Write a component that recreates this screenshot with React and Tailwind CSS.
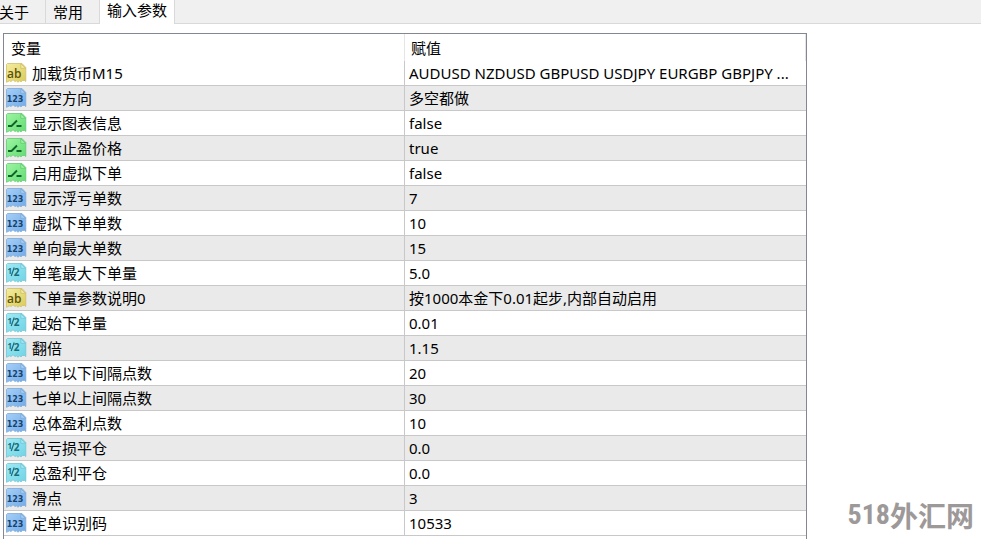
import { useState } from 'react';

const tabs = ['关于', '常用', '输入参数'];

const params = [
  { type: 'string', name: '加载货币M15', value: 'AUDUSD NZDUSD GBPUSD USDJPY EURGBP GBPJPY ...' },
  { type: 'int', name: '多空方向', value: '多空都做' },
  { type: 'bool', name: '显示图表信息', value: 'false' },
  { type: 'bool', name: '显示止盈价格', value: 'true' },
  { type: 'bool', name: '启用虚拟下单', value: 'false' },
  { type: 'int', name: '显示浮亏单数', value: '7' },
  { type: 'int', name: '虚拟下单单数', value: '10' },
  { type: 'int', name: '单向最大单数', value: '15' },
  { type: 'double', name: '单笔最大下单量', value: '5.0' },
  { type: 'string', name: '下单量参数说明0', value: '按1000本金下0.01起步,内部自动启用' },
  { type: 'double', name: '起始下单量', value: '0.01' },
  { type: 'double', name: '翻倍', value: '1.15' },
  { type: 'int', name: '七单以下间隔点数', value: '20' },
  { type: 'int', name: '七单以上间隔点数', value: '30' },
  { type: 'int', name: '总体盈利点数', value: '10' },
  { type: 'double', name: '总亏损平仓', value: '0.0' },
  { type: 'double', name: '总盈利平仓', value: '0.0' },
  { type: 'int', name: '滑点', value: '3' },
  { type: 'int', name: '定单识别码', value: '10533' },
];

const colors = {
  string: { light: '#f4eda0', dark: '#dccb58', edge: '#cdbf6c', ink: '#5c540c' },
  int: { light: '#a5cff8', dark: '#72aae8', edge: '#7fa9d6', ink: '#17446f' },
  bool: { light: '#9df5a2', dark: '#62dc72', edge: '#66c874', ink: '#0f6428' },
  double: { light: '#a0eaf5', dark: '#6fd3e4', edge: '#74c4d2', ink: '#1a6c7a' },
};

function TypeIcon({ type }) {
  const c = colors[type];
  const id = `fill-${type}`;

  return (
    <svg width="22" height="22" viewBox="0 0 22 22" className="shrink-0" aria-hidden="true">
      <defs>
        <linearGradient id={id} x1="0" y1="0" x2="1" y2="1">
          <stop offset="0" stopColor={c.light} />
          <stop offset="1" stopColor={c.dark} />
        </linearGradient>
      </defs>
      <path
        d="M2.5 1.5H17L20.8 5.5V19.5L19.5 18.5H17.5L16 19.8L14.5 18.8L13 20.3L11.5 18.8L10 19.5L8 17.8L6 19.5L4.5 18.8L1.5 20.3V2.5Z"
        fill={`url(#${id})`}
        stroke={c.edge}
        strokeWidth="0.8"
        strokeLinejoin="round"
      />
      <path d="M15.8 1.8V6.3H20.6Z" fill={c.light} stroke={c.edge} strokeWidth="0.8" strokeLinejoin="round" />
      {type === 'string' && (
        <text x="9.3" y="15.5" textAnchor="middle" fontSize="12" fontWeight="600" fontFamily="Open Sans, sans-serif" fill={c.ink}>ab</text>
      )}
      {type === 'int' && (
        <text x="10" y="15" textAnchor="middle" fontSize="8" fontWeight="700" fontFamily="DejaVu Sans, sans-serif" fill={c.ink}>123</text>
      )}
      {type === 'bool' && (
        <path d="M3 14H6.5L12 8.5M11.5 14H16.5" fill="none" stroke={c.ink} strokeWidth="1.9" />
      )}
      {type === 'double' && (
        <g fill={c.ink} fontFamily="Open Sans, sans-serif" fontWeight="700">
          <text x="2.6" y="11.5" fontSize="8">1</text>
          <path d="M6.2 14L9.2 5.5" stroke={c.ink} strokeWidth="1.2" />
          <text x="8.8" y="14" fontSize="10">2</text>
        </g>
      )}
    </svg>
  );
}

export default function App() {
  const [active, setActive] = useState('输入参数');

  return (
    <div className="relative flex min-h-screen flex-col overflow-hidden bg-white font-['Noto_Sans','Noto_Sans_CJK_SC',sans-serif] text-[15px] leading-6 text-black">
      <nav className="flex h-6 shrink-0 bg-[#f0f0f0]">
        <div className="-ml-2 flex">
          {tabs.map((tab) => (
            <button
              key={tab}
              type="button"
              onClick={() => setActive(tab)}
              className={
                active === tab
                  ? 'h-6 bg-white px-[7px] pb-1 leading-5'
                  : 'h-6 border-r border-b border-[#d9d9d9] pr-4 pl-[7px] leading-6'
              }
            >
              {tab}
            </button>
          ))}
        </div>
        <div className="flex-1 border-b border-l border-[#d9d9d9]" />
      </nav>

      <main className="flex flex-1 flex-col px-[3px] pt-[9px]">
        <div className="w-full max-w-[804px] flex-1 border border-b-0 border-[#828790]">
          <table className="w-full table-fixed border-separate border-spacing-0 text-left">
            <thead>
              <tr className="h-[27px]">
                <th className="w-1/2 border-r border-[#e5e5e5] p-0 pl-[7px] font-normal">变量</th>
                <th className="border-r border-[#e5e5e5] p-0 pl-1.5 font-normal">赋值</th>
              </tr>
            </thead>
            <tbody>
              {params.map((param) => (
                <tr key={param.name} className="h-[25px] even:bg-[#eaeaea]">
                  <td className="border-r border-b border-[#c8c8c8] p-0 pl-px">
                    <div className="flex items-center gap-[5px]">
                      <TypeIcon type={param.type} />
                      <span className="truncate">{param.name}</span>
                    </div>
                  </td>
                  <td className="truncate border-b border-[#c8c8c8] p-0 pl-1">{param.value}</td>
                </tr>
              ))}
            </tbody>
          </table>
        </div>
      </main>

      <div className="absolute right-[7px] bottom-1 flex items-center font-bold text-[#9d9999]">
        <span className="font-['Roboto_Condensed','Open_Sans_Condensed','Lato',sans-serif] text-[28px] leading-10">518</span>
        <span className="font-['Noto_Sans_CJK_SC',sans-serif] text-[28px] leading-10">外汇网</span>
      </div>
    </div>
  );
}
